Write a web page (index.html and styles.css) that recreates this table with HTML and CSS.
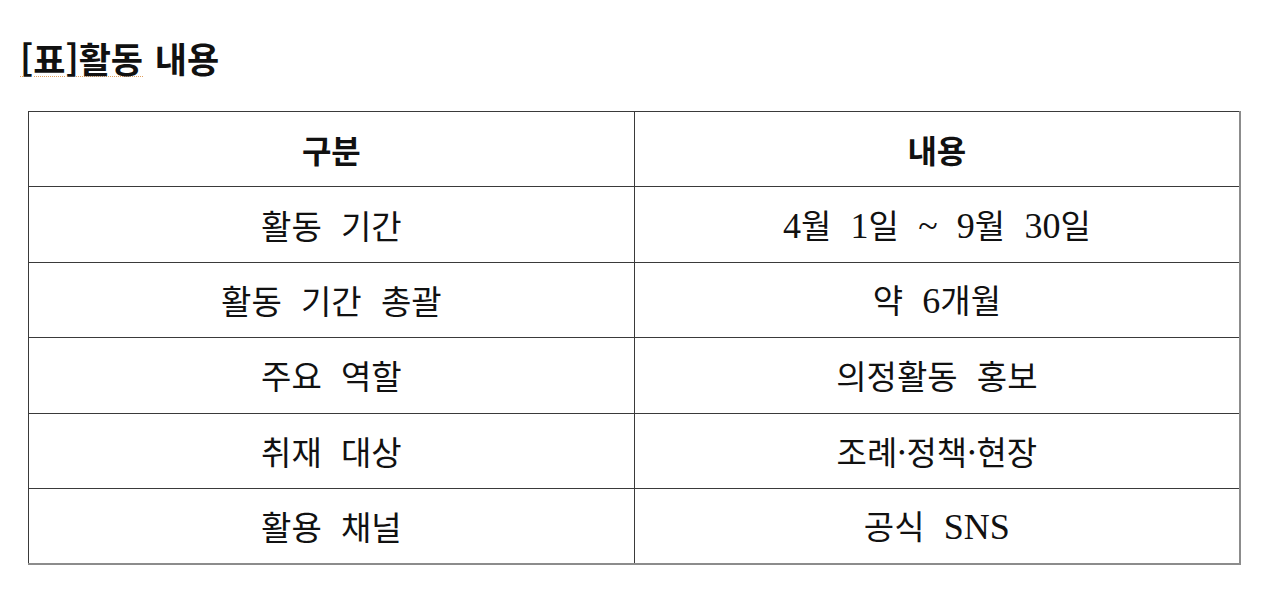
FILE: index.html
```html
<!DOCTYPE html>
<html lang="ko">
<head>
<meta charset="utf-8">
<link rel="stylesheet" href="styles.css">
</head>
<body>
<div class="page">
  <h1 class="title"><span class="spell">[표]활동</span> 내용</h1>
  <table class="info">
    <thead>
      <tr><th>구분</th><th>내용</th></tr>
    </thead>
    <tbody>
      <tr><td>활동 기간</td><td><span class="num">4</span>월 <span class="num">1</span>일 <span class="num">~</span> <span class="num">9</span>월 <span class="num">30</span>일</td></tr>
      <tr><td>활동 기간 총괄</td><td>약 <span class="num">6</span>개월</td></tr>
      <tr><td>주요 역할</td><td>의정활동 홍보</td></tr>
      <tr><td>취재 대상</td><td>조례·정책·현장</td></tr>
      <tr><td>활용 채널</td><td>공식 <span class="num">SNS</span></td></tr>
    </tbody>
  </table>
</div>
</body>
</html>
```

FILE: styles.css
```css
html, body {
  margin: 0;
  padding: 0;
  background: #ffffff;
}

.page {
  padding: 34px 0 0 20px;
  font-family: "Noto Sans CJK KR", "Noto Sans", sans-serif;
  color: #111111;
}

.title {
  margin: 0;
  font-size: 35px;
  line-height: 48px;
  font-weight: 700;
  word-spacing: 2px;
}

.spell {
  text-decoration: underline dotted #e0a060;
  text-underline-offset: 3px;
  text-decoration-thickness: 1px;
}

.info {
  margin: 29px 0 0 8px;
  width: 1213px;
  border-collapse: collapse;
  border-right: 2px solid #8c8c8c;
  border-bottom: 2px solid #8c8c8c;
}

.info th,
.info td {
  width: 50%;
  height: 74.4px;
  padding: 0;
  border: 1px solid #3a3a3a;
  text-align: center;
  vertical-align: middle;
  font-size: 33px;
  line-height: 40px;
  word-spacing: 10px;
}

.info th {
  font-weight: 700;
  font-size: 32px;
}

.info td {
  font-weight: 400;
}

.num {
  font-family: "Liberation Serif", serif;
  font-size: 36px;
  word-spacing: 0;
}
```
